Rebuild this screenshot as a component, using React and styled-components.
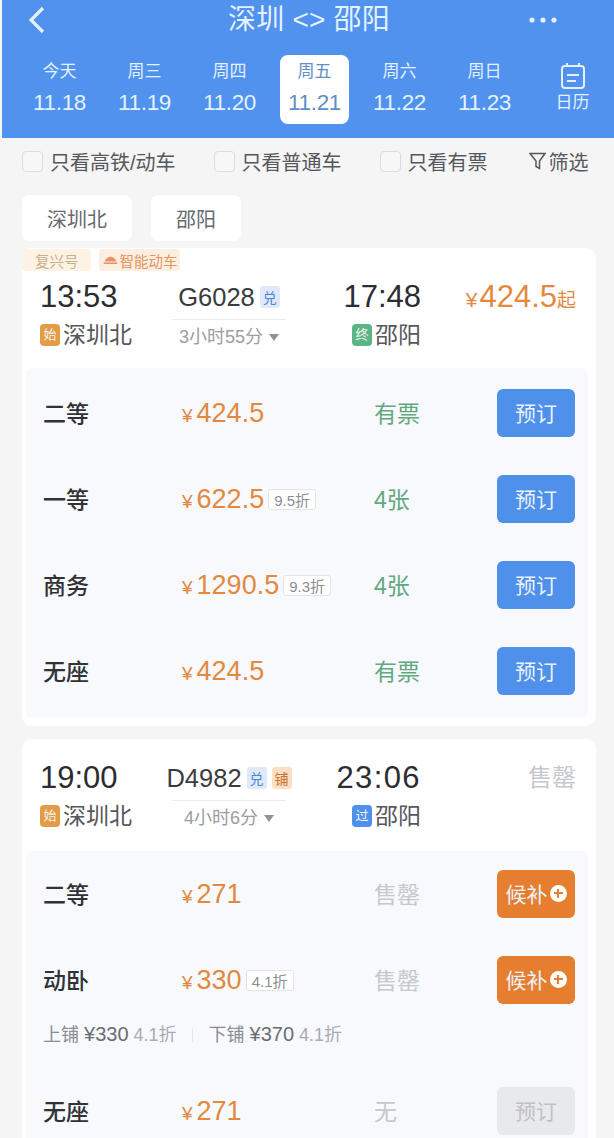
import React from 'react';
import styled, { createGlobalStyle } from 'styled-components';

const GlobalStyle = createGlobalStyle`
  html, body {
    margin: 0;
    padding: 0;
    height: 1138px;
    overflow: hidden;
    background: #f5f5f5;
    font-family: "Liberation Sans", "Noto Sans CJK SC", sans-serif;
  }
`;

const Page = styled.div`
  width: 614px;
  height: 1138px;
  overflow: hidden;
  background: #f5f5f5;
`;

const Header = styled.header`
  margin-left: 2px;
  height: 138px;
  background: #5092ee;
  color: #e4f1ff;
  box-sizing: border-box;
`;

const TitleBar = styled.div`
  height: 40px;
  display: flex;
  align-items: center;
  padding: 0 57px 0 26px;
`;

const Title = styled.h1`
  margin: 0 auto 0 183px;
  font-size: 28px;
  font-weight: 400;
  line-height: 38px;
  letter-spacing: 0.2px;
`;

const DateRow = styled.div`
  display: grid;
  grid-template-columns: repeat(6, 85px) 1fr;
  padding: 15px 0 0 15px;
`;

const DateCell = styled.div`
  width: 69px;
  height: 69px;
  justify-self: center;
  border-radius: 8px;
  display: flex;
  flex-direction: column;
  align-items: center;
  background: ${p => (p.$active ? '#fff' : 'transparent')};
  color: ${p => (p.$active ? '#5f8fc8' : '#e4f1ff')};
`;

const DayName = styled.span`
  font-size: 17px;
  line-height: 22px;
  margin-top: 6px;
`;

const DayDate = styled.span`
  font-size: 22.5px;
  line-height: 30px;
  margin-top: 5px;
  letter-spacing: -0.3px;
`;

const CalendarCell = styled.div`
  display: flex;
  flex-direction: column;
  align-items: center;
  justify-content: flex-start;
  height: 69px;
  padding: 7px 0 0 4px;
  box-sizing: border-box;
  font-size: 17px;
  span {
    margin-top: 1px;
    line-height: 24px;
  }
`;

const FilterRow = styled.div`
  height: 46px;
  display: flex;
  align-items: center;
  gap: 38px;
  padding-left: 22px;
  font-size: 20px;
  color: #55595e;
`;

const CheckLabel = styled.label`
  display: flex;
  align-items: center;
  gap: 7px;
`;

const CheckBox = styled.span`
  width: 19px;
  height: 19px;
  border: 1px solid #dcdcdc;
  border-radius: 4px;
  background: #f7f7f7;
`;

const FilterButton = styled.div`
  display: flex;
  align-items: center;
  gap: 3px;
  margin-left: 3px;
`;

const Stations = styled.div`
  display: flex;
  gap: 19px;
  padding: 11px 0 0 22px;
`;

const StationChip = styled.div`
  height: 46px;
  padding: 0 25px;
  display: flex;
  align-items: center;
  background: #fff;
  border-radius: 7px;
  font-size: 20px;
  color: #66696d;
`;

const Card = styled.section`
  position: relative;
  margin: ${p => p.$top}px 18px 0 22px;
  padding-bottom: 8px;
  background: #fff;
  border-radius: 10px;
`;

const Tags = styled.div`
  position: absolute;
  left: 0;
  top: 1px;
  display: flex;
  gap: 8px;
`;

const Tag = styled.span`
  height: 22px;
  padding: 0 ${p => (p.$icon ? 2 : 12)}px 0 ${p => (p.$icon ? 4 : 13)}px;
  display: flex;
  align-items: center;
  gap: 2px;
  border-radius: 4px;
  font-size: 14.5px;
  color: ${p => p.$color};
  background: ${p => p.$bg};
`;

const TrainHead = styled.div`
  display: grid;
  grid-template-columns: 110px 158px 113px 155px;
  padding: ${p => p.$top}px 0 0 18px;
  height: ${p => p.$height}px;
  box-sizing: border-box;
`;

const TimeCol = styled.div`
  display: flex;
  flex-direction: column;
  align-items: ${p => (p.$right ? 'flex-end' : 'flex-start')};
`;

const Time = styled.div`
  font-size: 31px;
  line-height: 38px;
  color: #2b2d30;
  letter-spacing: ${p => (p.$wide ? 1.4 : 0)}px;
`;

const StationName = styled.div`
  display: flex;
  align-items: center;
  gap: 3px;
  margin-top: 1px;
  font-size: 23px;
  line-height: 36px;
  color: #55585c;
`;

const StopBadge = styled.span`
  width: 20px;
  height: 22px;
  border-radius: 4px;
  display: flex;
  align-items: center;
  justify-content: center;
  font-size: 13px;
  color: #f3f7f3;
  background: ${p => p.$bg};
`;

const TrainCol = styled.div`
  display: flex;
  flex-direction: column;
  align-items: center;
`;

const TrainNo = styled.div`
  height: 38px;
  display: flex;
  align-items: center;
  gap: 5px;
  font-size: 25.5px;
  color: #3a3c40;
`;

const MiniTag = styled.span`
  width: 20px;
  height: 22px;
  border-radius: 3px;
  display: flex;
  align-items: center;
  justify-content: center;
  font-size: 14px;
  color: ${p => p.$color};
  background: ${p => p.$bg};
`;

const Duration = styled.div`
  width: 114px;
  margin-top: 3px;
  padding-top: 3px;
  border-top: 1px solid #e9ebee;
  display: flex;
  justify-content: center;
  align-items: center;
  gap: 6px;
  font-size: 18px;
  line-height: 28px;
  color: #9a9da1;
  white-space: nowrap;
`;

const Caret = styled.i`
  width: 0;
  height: 0;
  border-left: 5.5px solid transparent;
  border-right: 5.5px solid transparent;
  border-top: 7px solid #8f9296;
`;

const LowPrice = styled.div`
  height: 38px;
  display: flex;
  align-items: baseline;
  justify-content: flex-end;
  line-height: 38px;
  color: #e3893f;
  font-size: 31px;
  small {
    font-size: 19px;
  }
`;

const SoldOut = styled.div`
  height: 38px;
  line-height: 38px;
  text-align: right;
  font-size: 24px;
  color: #c5c8cc;
`;

const SeatPanel = styled.div`
  margin: 0 8px 0 4px;
  padding: ${p => (p.$flush ? 0 : 2)}px 0 4px;
  background: #f7f9fc;
  border-radius: 6px;
`;

const SeatRow = styled.div`
  height: 86px;
  display: grid;
  grid-template-columns: 139px 192px 123px 78px;
  align-items: center;
  padding-left: 17px;
`;

const SeatName = styled.div`
  font-size: 23px;
  font-weight: 500;
  color: #303236;
  padding-bottom: 3px;
`;

const SeatPrice = styled.div`
  display: flex;
  align-items: center;
  gap: 4px;
  color: #e3893f;
  font-size: 27px;
`;

const Yen = styled.span`
  font-size: ${p => p.$size || 19}px;
  margin-right: ${p => p.$gap || 0}px;
`;

const Discount = styled.span`
  height: 19px;
  padding: 0 5px;
  border: 1px solid #e3e4e6;
  border-radius: 3px;
  background: #fff;
  display: flex;
  align-items: center;
  font-size: 15px;
  color: #8b8e92;
`;

const Stock = styled.div`
  font-size: 23px;
  color: ${p => (p.$off ? '#c5c8cc' : '#62a87f')};
  padding-bottom: 3px;
`;

const ActionButton = styled.div`
  width: 78px;
  height: 48px;
  padding-bottom: 2px;
  box-sizing: border-box;
  border-radius: 6px;
  display: flex;
  align-items: center;
  justify-content: center;
  gap: 2px;
  font-size: 21px;
  color: ${p => (p.$kind === 'off' ? '#bfc1c3' : '#eaf2fc')};
  background: ${p => ({ book: '#4e90ea', wait: '#e67e30', off: '#e8e9ea' }[p.$kind])};
`;

const PlusDot = styled.span`
  width: 17px;
  height: 17px;
  border-radius: 50%;
  background: #fff;
  position: relative;
  &::before,
  &::after {
    content: '';
    position: absolute;
    background: #e67e30;
    left: 4px;
    top: 7.5px;
    width: 9px;
    height: 2px;
  }
  &::after {
    left: 7.5px;
    top: 4px;
    width: 2px;
    height: 9px;
  }
`;

const BerthLine = styled.div`
  height: 45px;
  display: flex;
  align-items: flex-start;
  padding-left: 17px;
  font-size: 18px;
  line-height: 22px;
  color: #8a8d91;
  b {
    font-weight: 400;
    font-size: 20px;
    color: #6a6d71;
  }
  em {
    font-style: normal;
    color: #a9acb0;
  }
`;

const BerthSep = styled.i`
  width: 1px;
  height: 14px;
  margin: 5px 16px 0 15px;
  background: #e6e7ea;
`;

const days = [
  ['今天', '11.18'],
  ['周三', '11.19'],
  ['周四', '11.20'],
  ['周五', '11.21', true],
  ['周六', '11.22'],
  ['周日', '11.23']
];

const BackIcon = () => (
  <svg width="17" height="28" viewBox="0 0 17 28" fill="none" stroke="#e4f1ff" strokeWidth="3.2">
    <path d="M15 2 L3 14 L15 26" />
  </svg>
);

const MoreIcon = () => (
  <svg width="28" height="6" viewBox="0 0 28 6" fill="#e4f1ff">
    <circle cx="3" cy="3" r="2.6" />
    <circle cx="14" cy="3" r="2.6" />
    <circle cx="25" cy="3" r="2.6" />
  </svg>
);

const CalendarIcon = () => (
  <svg width="26" height="28" viewBox="0 0 26 28" fill="none" stroke="#e4f1ff" strokeWidth="2">
    <rect x="2" y="4" width="22" height="22" rx="3" />
    <path d="M7 1 V5 M19 1 V5 M7 13 H19 M7 19 H16" />
  </svg>
);

const FunnelIcon = () => (
  <svg width="17" height="18" viewBox="0 0 17 18" fill="none" stroke="#55595e" strokeWidth="1.5">
    <path d="M1 1.5 H16 L10.5 9 V16.5 L7 14.5 V9 Z" />
  </svg>
);

const TrainIcon = () => (
  <svg width="15" height="8" viewBox="0 0 17 10" fill="#e8946a">
    <path d="M1 7 C2 4 5 1 9 1 C12 1 15 4 16 7 Z" />
    <rect x="0" y="8" width="17" height="2" />
  </svg>
);

const Price = ({ value, off }) => (
  <SeatPrice>
    <span><Yen $gap={4}>¥</Yen>{value}</span>
    {off && <Discount>{off}</Discount>}
  </SeatPrice>
);

const Seat = ({ name, price, off, stock, stockOff, kind = 'book' }) => (
  <SeatRow>
    <SeatName>{name}</SeatName>
    <Price value={price} off={off} />
    <Stock $off={stockOff}>{stock}</Stock>
    <ActionButton $kind={kind}>
      {kind === 'wait' ? '候补' : '预订'}
      {kind === 'wait' && <PlusDot />}
    </ActionButton>
  </SeatRow>
);

export default function App() {
  return (
    <Page>
      <GlobalStyle />
      <Header>
        <TitleBar>
          <BackIcon />
          <Title>深圳 &lt;&gt; 邵阳</Title>
          <MoreIcon />
        </TitleBar>
        <DateRow>
          {days.map(([name, date, active]) => (
            <DateCell key={date} $active={active}>
              <DayName>{name}</DayName>
              <DayDate>{date}</DayDate>
            </DateCell>
          ))}
          <CalendarCell>
            <CalendarIcon />
            <span>日历</span>
          </CalendarCell>
        </DateRow>
      </Header>

      <FilterRow>
        <CheckLabel><CheckBox />只看高铁/动车</CheckLabel>
        <CheckLabel><CheckBox />只看普通车</CheckLabel>
        <CheckLabel><CheckBox />只看有票</CheckLabel>
        <FilterButton><FunnelIcon />筛选</FilterButton>
      </FilterRow>

      <Stations>
        <StationChip>深圳北</StationChip>
        <StationChip>邵阳</StationChip>
      </Stations>

      <Card $top={7}>
        <Tags>
          <Tag $bg="#fdf3e4" $color="#c9b08c">复兴号</Tag>
          <Tag $icon $bg="#fdeee2" $color="#e2975f"><TrainIcon />智能动车</Tag>
        </Tags>
        <TrainHead $top={30} $height={120}>
          <TimeCol>
            <Time>13:53</Time>
            <StationName><StopBadge $bg="#e39b45">始</StopBadge>深圳北</StationName>
          </TimeCol>
          <TrainCol>
            <TrainNo>G6028<MiniTag $bg="#dfe9fa" $color="#4e86d8">兑</MiniTag></TrainNo>
            <Duration>3小时55分<Caret /></Duration>
          </TrainCol>
          <TimeCol $right>
            <Time>17:48</Time>
            <StationName><StopBadge $bg="#5cb583">终</StopBadge>邵阳</StationName>
          </TimeCol>
          <LowPrice><Yen $size={21} $gap={2}>¥</Yen>424.5<small>起</small></LowPrice>
        </TrainHead>
        <SeatPanel>
          <Seat name="二等" price="424.5" stock="有票" />
          <Seat name="一等" price="622.5" off="9.5折" stock="4张" />
          <Seat name="商务" price="1290.5" off="9.3折" stock="4张" />
          <Seat name="无座" price="424.5" stock="有票" />
        </SeatPanel>
      </Card>

      <Card $top={13}>
        <TrainHead $top={20} $height={112}>
          <TimeCol>
            <Time>19:00</Time>
            <StationName><StopBadge $bg="#e39b45">始</StopBadge>深圳北</StationName>
          </TimeCol>
          <TrainCol>
            <TrainNo>
              D4982
              <MiniTag $bg="#dfe9fa" $color="#4e86d8">兑</MiniTag>
              <MiniTag $bg="#f8dfc6" $color="#c9702c">铺</MiniTag>
            </TrainNo>
            <Duration>4小时6分<Caret /></Duration>
          </TrainCol>
          <TimeCol $right>
            <Time $wide>23:06</Time>
            <StationName><StopBadge $bg="#4e90ea">过</StopBadge>邵阳</StationName>
          </TimeCol>
          <SoldOut>售罄</SoldOut>
        </TrainHead>
        <SeatPanel $flush>
          <Seat name="二等" price="271" stock="售罄" stockOff kind="wait" />
          <Seat name="动卧" price="330" off="4.1折" stock="售罄" stockOff kind="wait" />
          <BerthLine>
            <span>上铺 <b>¥330</b> <em>4.1折</em></span>
            <BerthSep />
            <span>下铺 <b>¥370</b> <em>4.1折</em></span>
          </BerthLine>
          <Seat name="无座" price="271" stock="无" stockOff kind="off" />
        </SeatPanel>
      </Card>
    </Page>
  );
}
